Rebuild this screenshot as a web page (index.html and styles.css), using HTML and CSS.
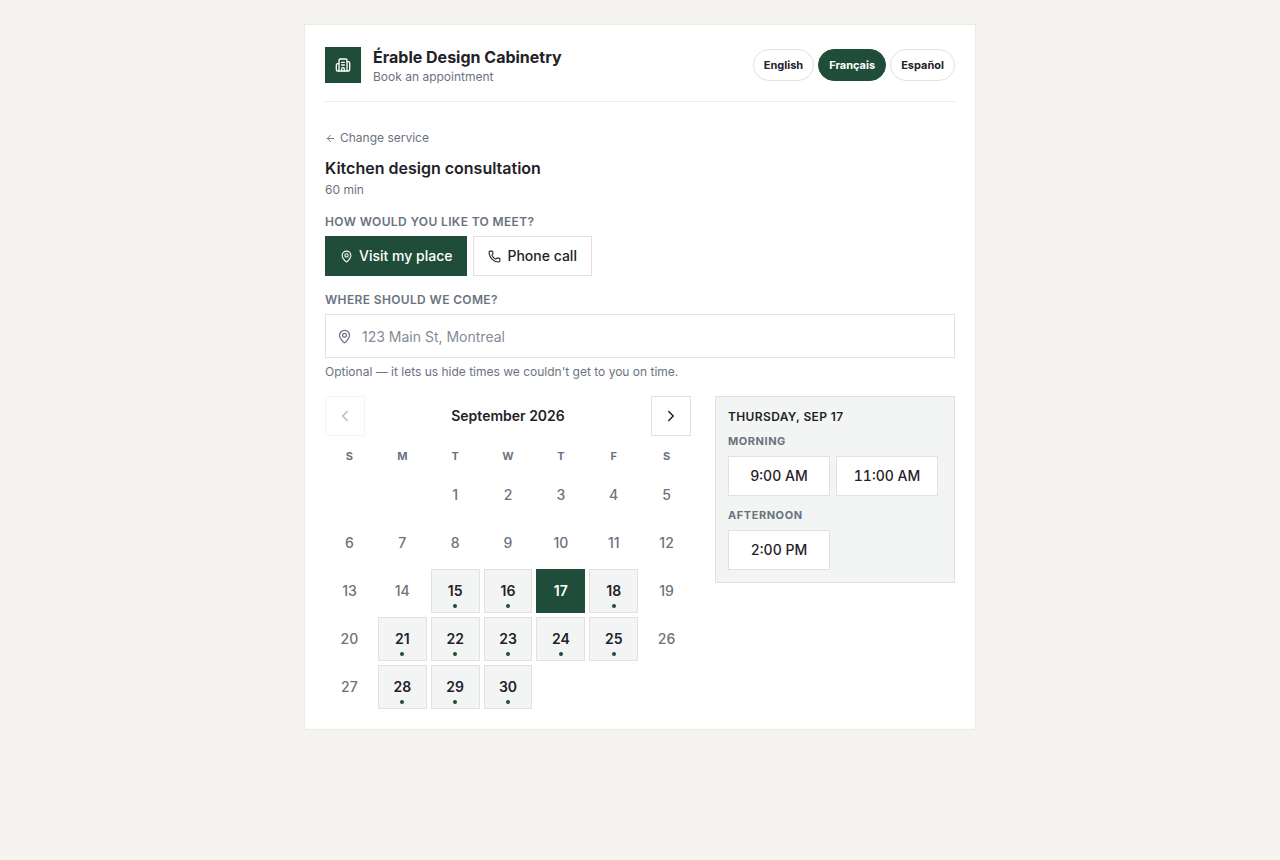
FILE: index.html
```html
<!DOCTYPE html>
<html lang="en">
<head>
    <meta charset="UTF-8">
    <meta name="viewport" content="width=device-width, initial-scale=1">
    <title>Book an appointment</title>
    <link rel="stylesheet" href="styles.css">
</head>
<body>
    <div class="container">
        <header class="header">
            <div class="logo">
                <svg class="icon" width="16" height="16" viewBox="0 0 24 24"><path d="M10 12h4M10 8h4M14 21v-3a2 2 0 0 0-4 0v3"/><path d="M6 10H4a2 2 0 0 0-2 2v7a2 2 0 0 0 2 2h16a2 2 0 0 0 2-2V9a2 2 0 0 0-2-2h-2"/><path d="M6 21V5a2 2 0 0 1 2-2h8a2 2 0 0 1 2 2v16"/></svg>
            </div>
            <div class="brand">
                <h1>Érable Design Cabinetry</h1>
                <p>Book an appointment</p>
            </div>
            <div class="languages">
                <button type="button" class="language">English</button>
                <button type="button" class="language active">Français</button>
                <button type="button" class="language">Español</button>
            </div>
        </header>

        <main>
            <a href="#" class="back-link">
                <svg class="icon" width="11" height="11" viewBox="0 0 24 24"><path d="m12 19-7-7 7-7M19 12H5"/></svg>
                Change service
            </a>
            <h2>Kitchen design consultation</h2>
            <p class="duration">60 min</p>

            <form>
                <div class="form-group">
                    <p class="form-label">How would you like to meet?</p>
                    <div class="meeting-group">
                        <button type="button" class="meeting active">
                            <svg class="icon" width="13" height="13" viewBox="0 0 24 24"><path d="M20 10c0 4.993-5.539 10.193-7.399 11.799a1 1 0 0 1-1.202 0C9.539 20.193 4 14.993 4 10a8 8 0 0 1 16 0"/><circle cx="12" cy="10" r="3"/></svg>
                            Visit my place
                        </button>
                        <button type="button" class="meeting">
                            <svg class="icon" width="13" height="13" viewBox="0 0 24 24"><path d="M13.832 16.568a1 1 0 0 0 1.213-.303l.355-.465A2 2 0 0 1 17 15h3a2 2 0 0 1 2 2v3a2 2 0 0 1-2 2A18 18 0 0 1 2 4a2 2 0 0 1 2-2h3a2 2 0 0 1 2 2v3a2 2 0 0 1-.8 1.6l-.468.351a1 1 0 0 0-.292 1.233 14 14 0 0 0 6.392 6.384"/></svg>
                            Phone call
                        </button>
                    </div>
                </div>
                <div class="form-group">
                    <label class="form-label" for="address">Where should we come?</label>
                    <div class="address-group">
                        <svg class="icon" width="15" height="15" viewBox="0 0 24 24"><path d="M20 10c0 4.993-5.539 10.193-7.399 11.799a1 1 0 0 1-1.202 0C9.539 20.193 4 14.993 4 10a8 8 0 0 1 16 0"/><circle cx="12" cy="10" r="3"/></svg>
                        <input type="text" id="address" name="address" placeholder="123 Main St, Montreal">
                    </div>
                    <p class="hint">Optional — it lets us hide times we couldn't get to you on time.</p>
                </div>
            </form>

            <div class="schedule">
                <section class="calendar">
                    <div class="month-nav">
                        <button type="button" class="nav-button" aria-label="Previous month" disabled>
                            <svg class="icon" width="18" height="18" viewBox="0 0 24 24"><path d="m15 18-6-6 6-6"/></svg>
                        </button>
                        <h3>September 2026</h3>
                        <button type="button" class="nav-button" aria-label="Next month">
                            <svg class="icon" width="18" height="18" viewBox="0 0 24 24"><path d="m9 18 6-6-6-6"/></svg>
                        </button>
                    </div>
                    <div class="weekdays">
                        <span>S</span><span>M</span><span>T</span><span>W</span><span>T</span><span>F</span><span>S</span>
                    </div>
                    <div class="days">
                        <button type="button" class="day first" disabled>1</button>
                        <button type="button" class="day" disabled>2</button>
                        <button type="button" class="day" disabled>3</button>
                        <button type="button" class="day" disabled>4</button>
                        <button type="button" class="day" disabled>5</button>
                        <button type="button" class="day" disabled>6</button>
                        <button type="button" class="day" disabled>7</button>
                        <button type="button" class="day" disabled>8</button>
                        <button type="button" class="day" disabled>9</button>
                        <button type="button" class="day" disabled>10</button>
                        <button type="button" class="day" disabled>11</button>
                        <button type="button" class="day" disabled>12</button>
                        <button type="button" class="day" disabled>13</button>
                        <button type="button" class="day" disabled>14</button>
                        <button type="button" class="day open">15</button>
                        <button type="button" class="day open">16</button>
                        <button type="button" class="day selected">17</button>
                        <button type="button" class="day open">18</button>
                        <button type="button" class="day" disabled>19</button>
                        <button type="button" class="day" disabled>20</button>
                        <button type="button" class="day open">21</button>
                        <button type="button" class="day open">22</button>
                        <button type="button" class="day open">23</button>
                        <button type="button" class="day open">24</button>
                        <button type="button" class="day open">25</button>
                        <button type="button" class="day" disabled>26</button>
                        <button type="button" class="day" disabled>27</button>
                        <button type="button" class="day open">28</button>
                        <button type="button" class="day open">29</button>
                        <button type="button" class="day open">30</button>
                    </div>
                </section>

                <section class="times">
                    <h3>Thursday, Sep 17</h3>
                    <h4>Morning</h4>
                    <div class="slots">
                        <button type="button" class="slot">9:00 AM</button>
                        <button type="button" class="slot">11:00 AM</button>
                    </div>
                    <h4>Afternoon</h4>
                    <div class="slots">
                        <button type="button" class="slot">2:00 PM</button>
                    </div>
                </section>
            </div>
        </main>
    </div>
</body>
</html>
```
FILE: styles.css
```css
* {
    box-sizing: border-box;
}

body {
    margin: 0;
    padding: 24px 16px;
    background-color: #f5f4f0;
    font-family: Inter, 'Liberation Sans', sans-serif;
    font-size: 14px;
    line-height: 20px;
    color: #1f2228;
}

h1, h2, h3, h4, p {
    margin: 0;
}

button, input {
    font-family: inherit;
    line-height: inherit;
    color: inherit;
}

button {
    border: 1px solid #e2e1dc;
    background-color: #ffffff;
    cursor: pointer;
}

.icon {
    flex: none;
    fill: none;
    stroke: currentColor;
    stroke-width: 2;
    stroke-linecap: round;
    stroke-linejoin: round;
}

.container {
    max-width: 672px;
    margin: 0 auto;
    padding: 20px;
    background-color: #ffffff;
    border: 1px solid #ebeae4;
}

.header {
    display: flex;
    align-items: center;
    gap: 12px;
    padding-bottom: 16px;
    border-bottom: 1px solid #ebeae4;
}

.logo {
    display: flex;
    align-items: center;
    justify-content: center;
    width: 36px;
    height: 36px;
    background-color: #1f4d3a;
    color: #ffffff;
}

.brand {
    flex: 1;
}

h1, h2 {
    font-size: 16px;
    line-height: 24px;
    font-weight: 600;
}

h1 {
    font-weight: 700;
}

.brand p,
.duration,
.hint {
    font-size: 12px;
    line-height: 16px;
    color: #6b7280;
}

.languages {
    display: flex;
    gap: 4px;
}

.language {
    height: 32px;
    padding: 0 10px;
    border-radius: 16px;
    font-size: 11px;
    font-weight: 700;
}

.language.active,
.meeting.active {
    background-color: #1f4d3a;
    border-color: #1f4d3a;
    color: #ffffff;
}

main {
    padding-top: 24px;
}

.back-link {
    display: inline-flex;
    align-items: center;
    gap: 4px;
    height: 24px;
    margin-bottom: 6px;
    font-size: 12px;
    line-height: 16px;
    color: #6b7280;
    text-decoration: none;
}

.duration {
    margin-top: 2px;
}

.form-group {
    margin-top: 16px;
}

.form-label {
    display: block;
    margin-bottom: 6px;
    font-size: 12px;
    line-height: 16px;
    font-weight: 600;
    letter-spacing: 0.03em;
    text-transform: uppercase;
    color: #6b7280;
}

.meeting-group {
    display: flex;
    gap: 6px;
}

.meeting {
    display: flex;
    align-items: center;
    gap: 6px;
    height: 40px;
    padding: 0 14px;
    font-size: 14px;
    font-weight: 500;
}

.address-group {
    display: flex;
    align-items: center;
    height: 44px;
    padding-left: 11px;
    border: 1px solid #e2e1dc;
    color: #6b7280;
}

.address-group input {
    flex: 1;
    height: 100%;
    padding: 0 10px;
    border: none;
    outline: none;
    background: none;
    font-size: 14px;
    color: #1f2228;
}

.address-group input::placeholder {
    color: #858c99;
}

.hint {
    margin-top: 6px;
}

.schedule {
    display: grid;
    grid-template-columns: 1fr 240px;
    align-items: start;
    gap: 24px;
    margin-top: 16px;
}

.month-nav {
    display: flex;
    align-items: center;
    justify-content: space-between;
}

.month-nav h3 {
    font-size: 14px;
    font-weight: 600;
}

.nav-button {
    display: flex;
    align-items: center;
    justify-content: center;
    width: 40px;
    height: 40px;
    padding: 0;
}

.nav-button:disabled {
    opacity: 0.3;
}

.weekdays,
.days {
    display: grid;
    grid-template-columns: repeat(7, 1fr);
    gap: 4px;
}

.weekdays {
    margin: 12px 0 8px;
    font-size: 11px;
    line-height: 17px;
    font-weight: 700;
    text-align: center;
    color: #6b7280;
}

.day {
    position: relative;
    height: 44px;
    padding: 0;
    font-size: 14px;
    font-weight: 600;
}

.day.first {
    grid-column-start: 3;
}

.day:disabled {
    border-color: transparent;
    background: none;
    font-weight: 500;
    color: #6b7280;
}

.day.open {
    background-color: #f3f5f4;
}

.day.open::after {
    content: "";
    position: absolute;
    left: 50%;
    bottom: 4px;
    width: 4px;
    height: 4px;
    margin-left: -2px;
    border-radius: 50%;
    background-color: #1f4d3a;
}

.day.selected {
    background-color: #1f4d3a;
    border-color: #1f4d3a;
    color: #ffffff;
}

.times {
    padding: 12px;
    background-color: #f3f5f4;
    border: 1px solid #e2e1dc;
}

.times h3 {
    margin-bottom: 8px;
    font-size: 12px;
    line-height: 16px;
    font-weight: 600;
    letter-spacing: 0.03em;
    text-transform: uppercase;
}

.times h4 {
    margin-bottom: 6px;
    font-size: 11px;
    line-height: 17px;
    font-weight: 700;
    letter-spacing: 0.05em;
    text-transform: uppercase;
    color: #6b7280;
}

.slots {
    display: grid;
    grid-template-columns: 1fr 1fr;
    gap: 6px;
    padding-right: 4px;
}

.slots + h4 {
    margin-top: 11px;
}

.slot {
    height: 40px;
    padding: 0;
    font-size: 14px;
    font-weight: 500;
    font-variant-numeric: tabular-nums;
}

@media (max-width: 640px) {
    .header {
        flex-wrap: wrap;
    }

    .schedule {
        grid-template-columns: 1fr;
    }
}
```
